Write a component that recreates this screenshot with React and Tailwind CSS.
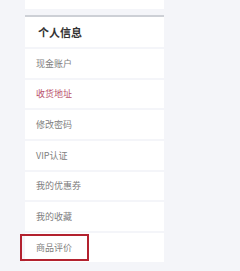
const items = [
  { label: '现金账户' },
  { label: '收货地址', active: true },
  { label: '修改密码' },
  { label: 'VIP认证' },
  { label: '我的优惠券' },
  { label: '我的收藏' },
  { label: '商品评价', boxed: true },
]

export default function App() {
  return (
    <div
      className="h-[271px] w-[240px] overflow-hidden bg-[#f4f5f9]"
      style={{ fontFamily: '"Noto Sans CJK SC", "Liberation Sans", sans-serif' }}
    >
      <div className="ml-[25px] w-[139px]">
        <div className="h-[9px] bg-white" />
        <div className="mt-[6px] h-[2px] bg-[#cdd0d6]" />
        <div className="flex h-[30px] items-center bg-white pl-[13px] text-[11px] font-bold text-[#333]">
          个人信息
        </div>
        <div className="mt-[2px] flex flex-col gap-[2px]">
          {items.map((item) => (
            <div key={item.label} className="relative flex h-[28.7px] items-center bg-white pl-[11px]">
              <span className={`text-[9px] ${item.active ? 'text-[#b9506a]' : 'text-[#808080]'}`}>
                {item.label}
              </span>
              {item.boxed && (
                <div className="absolute left-[-5px] top-[1px] h-[27px] w-[69px] border-2 border-[#b3222f]" />
              )}
            </div>
          ))}
        </div>
      </div>
    </div>
  )
}
